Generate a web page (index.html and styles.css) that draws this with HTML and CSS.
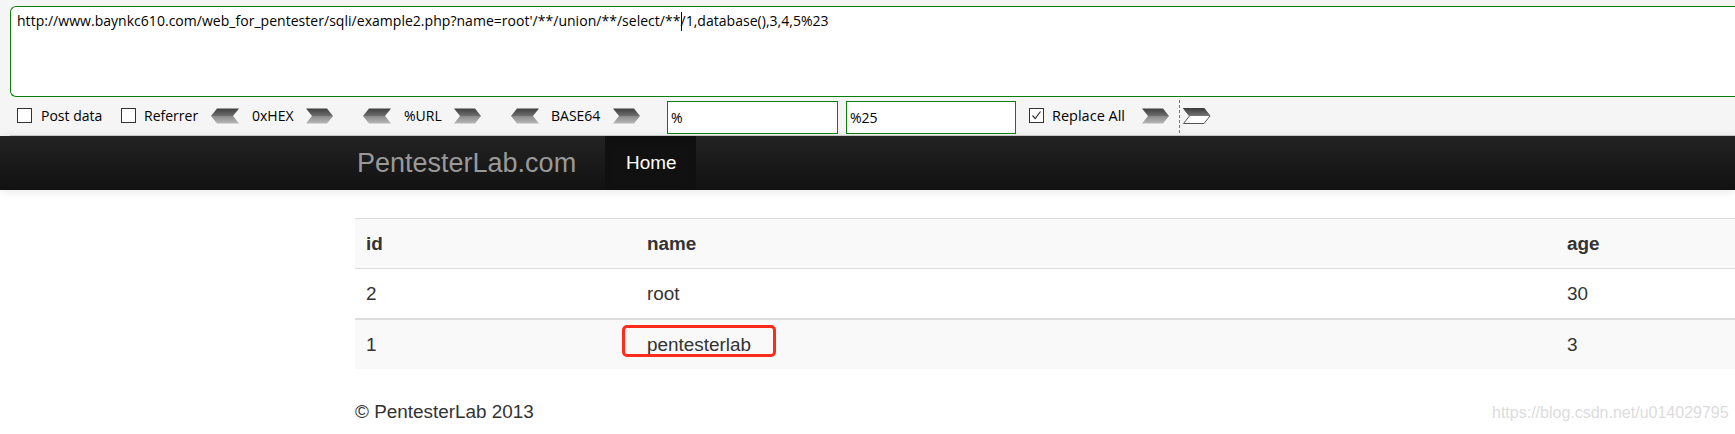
FILE: index.html
```html
<!DOCTYPE html>
<html lang="en">
<head>
<meta charset="utf-8">
<title>PentesterLab &raquo; Web for Pentester</title>
<link rel="stylesheet" href="styles.css">
</head>
<body>
<svg class="defs" aria-hidden="true">
  <defs>
    <linearGradient id="gArrow" x1="0" y1="0" x2="0" y2="1">
      <stop offset="0" stop-color="#3f3f3f"/>
      <stop offset="0.48" stop-color="#6c6c6c"/>
      <stop offset="0.52" stop-color="#8a8a8a"/>
      <stop offset="1" stop-color="#b8b8b8"/>
    </linearGradient>
    <linearGradient id="gTop" x1="0" y1="0" x2="0" y2="1">
      <stop offset="0" stop-color="#3a3a3a"/>
      <stop offset="1" stop-color="#767676"/>
    </linearGradient>
  </defs>
</svg>

<div class="hackbar">
  <div class="url">http://www.baynkc610.com/web_for_pentester/sqli/example2.php?name=root'/**/union/**/select/**<span class="caret"></span>/1,database(),3,4,5%23</div>
  <div class="toolbar">
    <span class="cb cb-post"></span><span class="lbl l-post">Post data</span>
    <span class="cb cb-ref"></span><span class="lbl l-ref">Referrer</span>

    <svg class="arw a-l1" width="28" height="16" viewBox="0 0 28 16"><polygon points="28,0.5 6,0.5 0,8 6,15.5 28,15.5 22,8" fill="url(#gArrow)"/></svg>
    <span class="lbl l-hex">0xHEX</span>
    <svg class="arw a-r" width="27" height="16" viewBox="0 0 27 16"><polygon points="0,0.5 21,0.5 27,8 21,15.5 0,15.5 6,8" fill="url(#gArrow)"/></svg>

    <svg class="arw a-l" width="28" height="16" viewBox="0 0 28 16"><polygon points="28,0.5 6,0.5 0,8 6,15.5 28,15.5 22,8" fill="url(#gArrow)"/></svg>
    <span class="lbl l-url">%URL</span>
    <svg class="arw a-r2" width="27" height="16" viewBox="0 0 27 16"><polygon points="0,0.5 21,0.5 27,8 21,15.5 0,15.5 6,8" fill="url(#gArrow)"/></svg>

    <svg class="arw a-l" width="28" height="16" viewBox="0 0 28 16"><polygon points="28,0.5 6,0.5 0,8 6,15.5 28,15.5 22,8" fill="url(#gArrow)"/></svg>
    <span class="lbl l-b64">BASE64</span>
    <svg class="arw a-r" width="27" height="16" viewBox="0 0 27 16"><polygon points="0,0.5 21,0.5 27,8 21,15.5 0,15.5 6,8" fill="url(#gArrow)"/></svg>

    <div class="field f-1">%</div>
    <div class="field f-2">%25</div>

    <span class="cb cb-rep"><svg width="13" height="13" viewBox="0 0 13 13"><polyline points="2.5,6.5 5.2,9.5 10.5,2.5" fill="none" stroke="#333" stroke-width="1.2"/></svg></span>
    <span class="lbl l-rep">Replace All</span>
    <svg class="arw a-r3" width="27" height="16" viewBox="0 0 27 16"><polygon points="0,0.5 21,0.5 27,8 21,15.5 0,15.5 6,8" fill="url(#gArrow)"/></svg>
    <span class="sep"></span>
    <svg class="arw a-w" width="28" height="16" viewBox="0 0 28 16"><polygon points="0.5,0.5 21,0.5 27,8 21,15.5 0.5,15.5 6.5,8" fill="#fff" stroke="#555" stroke-width="1"/><polygon points="0,0 21.2,0 27.5,8 6.5,8" fill="url(#gTop)"/></svg>
  </div>
</div>

<div class="navbar">
  <div class="container nav-inner">
    <span class="brand">PentesterLab.com</span>
    <ul class="nav">
      <li class="active">Home</li>
    </ul>
  </div>
</div>

<div class="container main">
  <table class="table">
    <colgroup><col class="c-id"><col class="c-name"><col class="c-age"></colgroup>
    <tr class="odd head"><th>id</th><th>name</th><th>age</th></tr>
    <tr><td>2</td><td>root</td><td>30</td></tr>
    <tr class="odd r3"><td>1</td><td>pentesterlab</td><td>3</td></tr>
  </table>
  <footer class="footer">&copy; PentesterLab 2013</footer>
</div>

<div class="mark"></div>
<div class="watermark">https://blog.csdn.net/u014029795</div>
</body>
</html>
```

FILE: styles.css
```css
html, body {
  margin: 0;
  padding: 0;
  width: 1735px;
  height: 434px;
  overflow: hidden;
  background: #fff;
}

.defs {
  width: 0;
  height: 0;
  display: block;
  overflow: hidden;
}

/* ---------- HackBar ---------- */
.hackbar {
  background: #f5f5f5;
  padding: 6px 0 0 10px;
  font-family: "Open Sans", "Noto Sans", sans-serif;
  color: #000;
}

.url {
  box-sizing: border-box;
  height: 91px;
  border: 1px solid #0a800a;
  border-right: 0;
  border-radius: 6px 0 0 6px;
  background: #fff;
  padding: 4px 6px 0 6px;
  font-size: 14px;
  letter-spacing: 0.03px;
  line-height: 19px;
  white-space: nowrap;
  overflow: hidden;
}

.caret {
  display: inline-block;
  width: 1px;
  height: 19px;
  background: #000;
  vertical-align: -5px;
  margin-right: -1px;
}

.toolbar {
  display: flex;
  align-items: center;
  height: 39px;
  padding-left: 7px;
  padding-bottom: 1px;
  border-bottom: 1px solid #cfcfcf;
  box-sizing: border-box;
  font-size: 14px;
  white-space: nowrap;
}

.cb {
  box-sizing: border-box;
  width: 15px;
  height: 15px;
  border: 1px solid #333;
  background: #fff;
  flex: none;
  display: flex;
  align-items: center;
  justify-content: center;
}
.cb-post { margin-left: 0; }
.cb-ref { margin-left: 21px; }
.cb-rep { margin-left: 13px; }

.lbl {
  display: block;
  flex: none;
  line-height: 20px;
}
.l-post { margin-left: 9px; width: 59px; }
.l-ref { margin-left: 8px; width: 53px; }
.l-hex { margin-left: 13px; width: 43px; }
.l-url { margin-left: 13px; width: 41px; }
.l-b64 { margin-left: 12px; width: 51px; }
.l-rep { margin-left: 8px; width: 74px; font-size: 14.5px; }

.arw { flex: none; display: block; }
.a-l1 { margin-left: 14px; }
.a-l { margin-left: 30px; }
.a-r { margin-left: 11px; }
.a-r2 { margin-left: 9px; }
.a-r3 { margin-left: 16px; }
.a-w { margin-left: 3px; }

.sep {
  flex: none;
  align-self: stretch;
  width: 0;
  margin: 3px 0 1px 10px;
  border-left: 1px dashed #777;
}

.field {
  box-sizing: border-box;
  flex: none;
  align-self: flex-end;
  height: 33px;
  border: 1px solid #0a800a;
  background: #fff;
  padding: 0 3px;
  line-height: 31px;
  font-size: 14px;
}
.f-1 { margin-left: 27px; width: 171px; }
.f-2 { margin-left: 8px; width: 170px; }

/* ---------- PentesterLab page ---------- */
.container {
  margin-left: 355px;
  width: 1380px;
}

.navbar {
  height: 54px;
  background: linear-gradient(to bottom, #232323, #111111);
  box-shadow: 0 1px 10px rgba(0, 0, 0, 0.1);
  font-family: "Liberation Sans", Arial, sans-serif;
}

.nav-inner {
  display: flex;
  align-items: stretch;
  height: 54px;
}

.brand {
  display: block;
  width: 248px;
  padding-left: 2px;
  line-height: 54px;
  font-size: 27px;
  color: #999;
}

.nav {
  list-style: none;
  margin: 0;
  padding: 0;
  display: flex;
}

.nav li {
  padding: 0 20px 0 21px;
  line-height: 54px;
  font-size: 18.9px;
  color: #fff;
}
.nav li.active {
  background: #111;
  box-shadow: inset 0 3px 8px rgba(0, 0, 0, 0.125);
}

.main {
  font-family: "Liberation Sans", Arial, sans-serif;
  color: #333;
  font-size: 18.9px;
}

.table {
  width: 1380px;
  margin-top: 28px;
  border-collapse: collapse;
  table-layout: fixed;
}
.c-id { width: 281px; }
.c-name { width: 920px; }

.table th,
.table td {
  text-align: left;
  padding: 11px 11px;
  line-height: 27px;
  border-top: 1px solid #dddddd;
}
.table th { font-weight: bold; }
.table tr.head th { border-bottom: 1px solid #dddddd; }
.table tr.r3 td { border-top: 2px solid #dddddd; }
.table tr.odd { background: #f9f9f9; }

.footer {
  margin-top: 29px;
  line-height: 27px;
}

/* annotation + watermark overlays */
.mark {
  position: absolute;
  left: 622px;
  top: 325px;
  width: 154px;
  height: 32px;
  box-sizing: border-box;
  border: 3px solid #ff2b1c;
  border-radius: 5px;
}

.watermark {
  position: absolute;
  left: 1492px;
  top: 403px;
  font-family: "Liberation Sans", Arial, sans-serif;
  font-size: 16px;
  line-height: 20px;
  color: #dcdcdc;
  white-space: nowrap;
}
```
